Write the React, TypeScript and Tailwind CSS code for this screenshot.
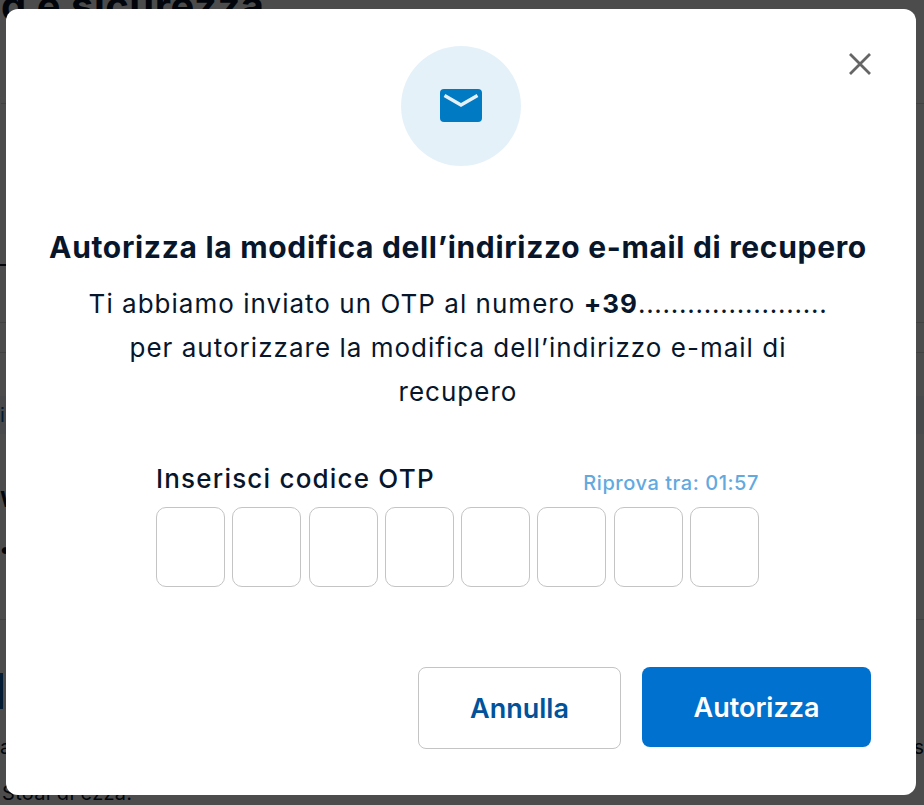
const otpSlots = [0, 1, 2, 3, 4, 5, 6, 7];

const Backdrop = () => {
  return (
    <div className="h-[805px] overflow-hidden bg-white">
      <h1 className="-mt-[21px] ml-[1px] pb-[71px] border-b border-[#d9d9d9] text-[40px] leading-[53px] font-bold tracking-[0.5px] text-[#07162b] whitespace-nowrap">
        d e sicurezza
      </h1>
      <div className="h-[219px] pt-[160px] border-b border-[#d9d9d9]">
        <div className="h-[2px] w-[7px] bg-[#07162b]" />
      </div>
      <div className="h-[30px] border-b border-[#d9d9d9]" />
      <div className="mt-[43px] h-[38px] bg-[#eef3f7] text-[20px] leading-[38px] text-[#0b5cab]">i</div>
      <div className="mt-[50px] text-[22px] leading-[30px] font-bold text-[#07162b]">W</div>
      <div className="mt-[20px] text-[22px] leading-[30px] font-bold text-[#07162b]">•</div>
      <div className="mt-[55px] border-b border-[#d9d9d9]" />
      <div className="mt-[53px] h-[36px] w-[3px] bg-[#0b5cab]" />
      <div className="mt-[26px] flex justify-between text-[20px] leading-[24px] text-[#07162b]">
        <span>a</span>
        <span>s</span>
      </div>
      <div className="mt-[22px] pl-[2px] text-[20px] leading-[24px] tracking-[0.3px] text-[#07162b]">Stoai di ezza.</div>
    </div>
  );
};

const App = () => {
  return (
    <div className="relative h-[805px] w-[924px] overflow-hidden font-['Inter',sans-serif]">
      <Backdrop />
      <div className="absolute inset-0 bg-black/70" />
      <div className="absolute left-[6px] top-[9px] flex h-[786px] w-[910px] flex-col items-center rounded-[12px] bg-white pt-[37px] text-[#07162b]">
        <button className="absolute right-[44px] top-[43px] text-[#666666]">
          <svg width="24" height="24" viewBox="0 0 24 24" fill="none" stroke="currentColor" strokeWidth="2.8">
            <path d="M2 2 L22 22 M22 2 L2 22" />
          </svg>
        </button>
        <div className="flex h-[120px] w-[120px] items-center justify-center rounded-full bg-[#e5f1f9]">
          <svg width="42" height="34" viewBox="0 0 42 34">
            <rect width="42" height="33" rx="4" fill="#007ac3" />
            <path d="M4.5 6.5 L21 16 L37.5 6.5" fill="none" stroke="#e5f1f9" strokeWidth="3.4" />
          </svg>
        </div>
        <div className="mr-[6px] flex flex-col items-center">
          <h2 className="mt-[61px] text-[30px] leading-[40px] font-bold tracking-[0.68px] whitespace-nowrap">
            Autorizza la modifica dell’indirizzo e-mail di recupero
          </h2>
          <p className="mt-[15px] w-[800px] text-center text-[26px] leading-[44px] tracking-[1.02px]">
            Ti abbiamo inviato un OTP al numero <b className="font-bold">+39</b>
            <span className="tracking-[0.75px]">.......................</span>
            <br />
            per autorizzare la modifica dell’indirizzo e-mail di
            <br />
            recupero
          </p>
          <div className="mt-[45px] w-[604px] pr-[1px]">
            <div className="flex items-end justify-between">
              <span className="text-[26px] leading-[40px] font-medium tracking-[1.2px]">Inserisci codice OTP</span>
              <span className="text-[20px] leading-[32px] font-medium tracking-[0.55px] text-[#62a9e0]">Riprova tra: 01:57</span>
            </div>
            <div className="mt-[8px] flex justify-between">
              {otpSlots.map((slot) => (
                <div key={slot} className="h-[80px] w-[69px] rounded-[10px] border border-[#c4c4c4]" />
              ))}
            </div>
          </div>
        </div>
        <div className="mt-[80px] flex w-full items-start justify-end gap-[21px] pr-[45px]">
          <button className="h-[82px] w-[203px] rounded-[8px] border border-[#c4c4c4] pt-[2px] text-[27px] font-semibold text-[#00539b]">
            Annulla
          </button>
          <button className="h-[80px] w-[229px] rounded-[8px] bg-[#0071ce] pt-[2px] text-[27px] font-semibold text-white">
            Autorizza
          </button>
        </div>
      </div>
    </div>
  );
};

export default App;
